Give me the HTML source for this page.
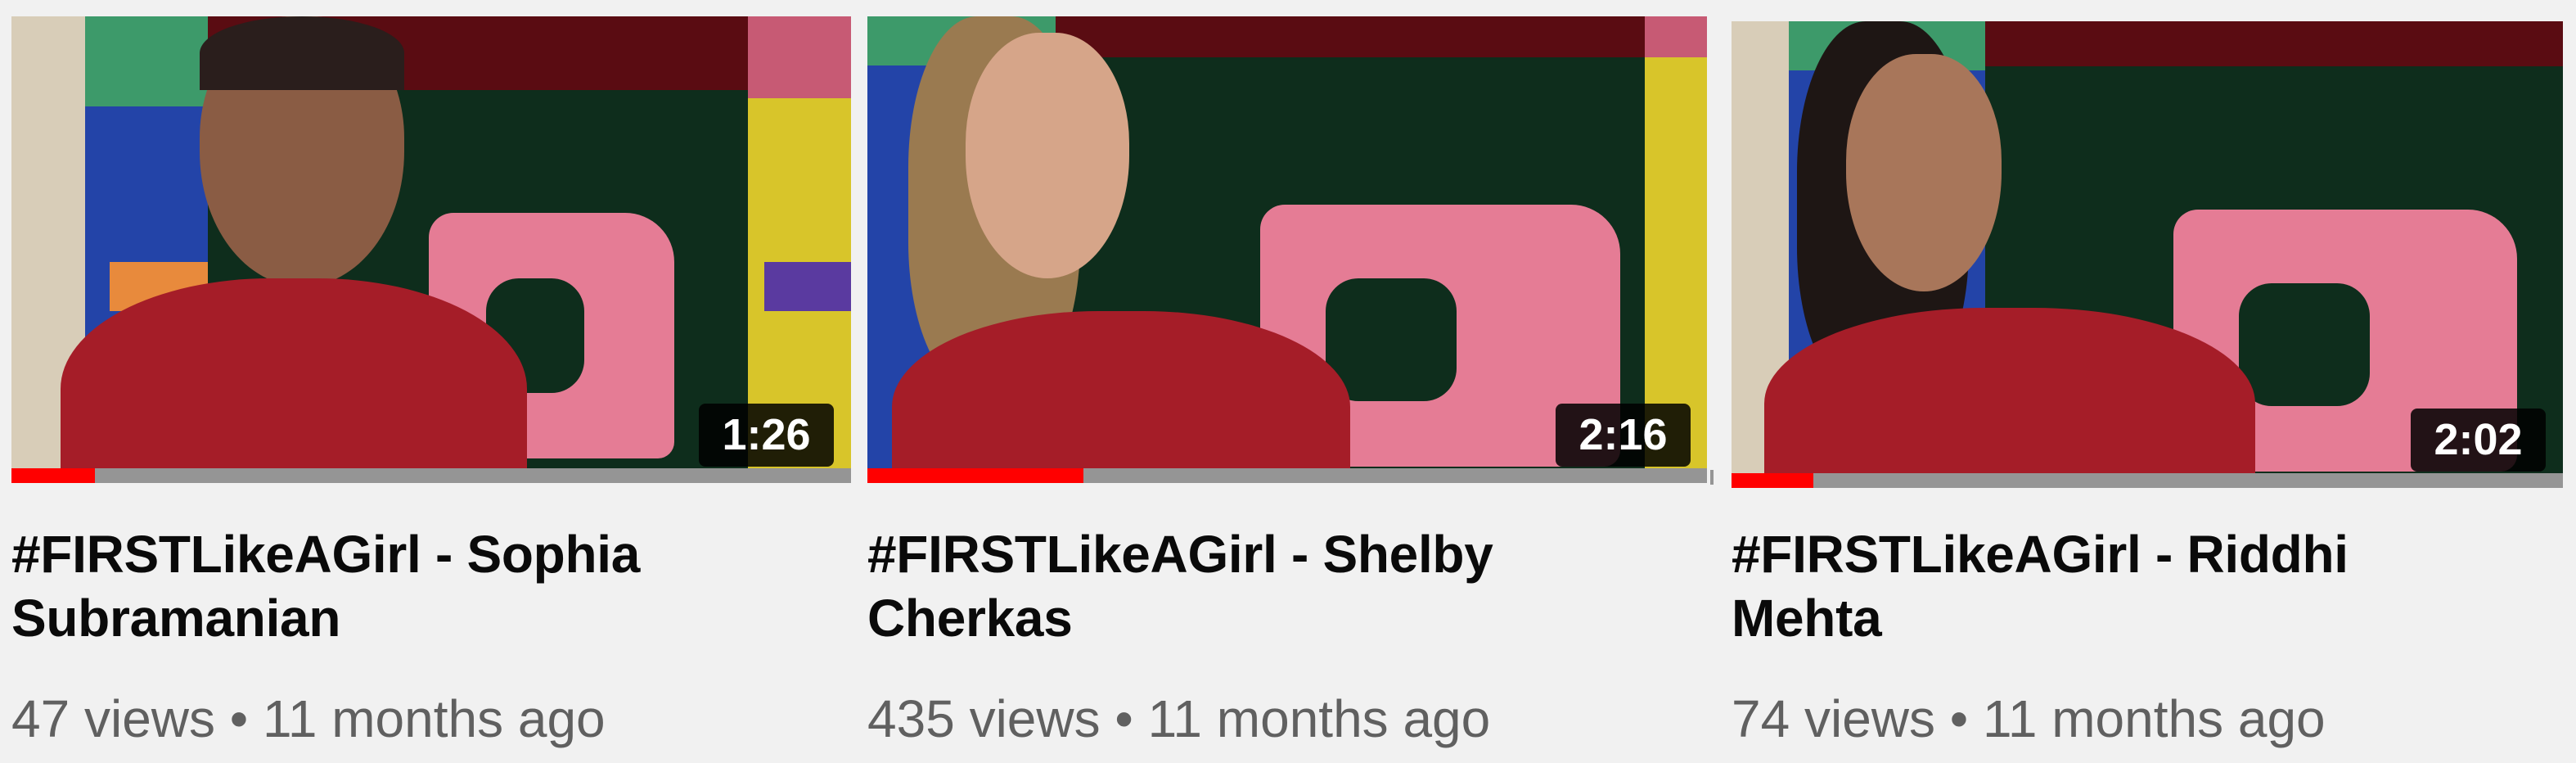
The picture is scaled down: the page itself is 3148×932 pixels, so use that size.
<!DOCTYPE html>
<html><head><meta charset="utf-8"><style>
body{margin:0;width:3148px;height:932px;background:#f1f1f1;position:relative;overflow:hidden;font-family:"Liberation Sans",Arial,sans-serif}
.card{position:absolute;width:1026px}
.th{position:absolute;left:0;top:0;width:1026px;height:552px;overflow:hidden;background:#0e2a18}
.th div{position:absolute}
.bar{position:absolute;left:0;top:552px;width:1026px;height:18px;background:#959595}
.bar i{position:absolute;left:0;top:0;height:18px;background:#ff0000}
.dur{position:absolute;top:473px;width:165px;height:77px;border-radius:8px;background:rgba(0,0,0,.85);color:#fff;font-weight:bold;font-size:54px;line-height:77px;text-align:center}
.t{position:absolute;left:0;top:618px;font-size:64px;font-weight:bold;line-height:78px;color:#0a0a0a;letter-spacing:-0.3px}
.m{position:absolute;left:0;top:822px;font-size:64px;color:#606060;line-height:72px}
</style></head><body>

<div class="card" style="left:14px;top:20px">
 <div class="th">
  <div style="left:0;top:0;width:90px;height:552px;background:#d8cdb8"></div>
  <div style="left:90px;top:0;width:150px;height:110px;background:#3d9a6a"></div>
  <div style="left:90px;top:110px;width:150px;height:442px;background:#2344a8"></div>
  <div style="left:120px;top:300px;width:140px;height:60px;background:#e88a3c"></div>
  <div style="left:240px;top:0;width:660px;height:90px;background:#5a0c12"></div>
  <div style="left:240px;top:90px;width:660px;height:462px;background:#0e2d1c"></div>
  <div style="left:900px;top:0;width:126px;height:100px;background:#c75a74"></div>
  <div style="left:900px;top:100px;width:126px;height:452px;background:#d8c52a"></div>
  <div style="left:920px;top:300px;width:106px;height:60px;background:#5a3aa0"></div>
  <div style="left:510px;top:240px;width:300px;height:300px;background:#e57c95;border-radius:30px 60px 20px 80px"></div>
  <div style="left:580px;top:320px;width:120px;height:140px;background:#0e2d1c;border-radius:40px"></div>
  <div style="left:230px;top:0;width:250px;height:330px;background:#8a5c44;border-radius:45% 45% 50% 50%"></div>
  <div style="left:230px;top:0;width:250px;height:90px;background:#2a1e1c;border-radius:50% 50% 0 0"></div>
  <div style="left:60px;top:320px;width:570px;height:300px;background:#a51d28;border-radius:45% 45% 0 0"></div>
 </div>
 <div class="bar"><i style="width:102px"></i></div>
 <div class="dur" style="left:840px">1:26</div>
 <div class="t">#FIRSTLikeAGirl - Sophia<br>Subramanian</div>
 <div class="m">47 views • 11 months ago</div>
</div>

<div class="card" style="left:1060px;top:20px">
 <div class="th">
  <div style="left:0;top:0;width:60px;height:552px;background:#d8cdb8"></div>
  <div style="left:0;top:0;width:230px;height:60px;background:#3d9a6a"></div>
  <div style="left:0;top:60px;width:230px;height:492px;background:#2344a8"></div>
  <div style="left:230px;top:0;width:720px;height:50px;background:#5a0c12"></div>
  <div style="left:230px;top:50px;width:720px;height:502px;background:#0e2d1c"></div>
  <div style="left:950px;top:0;width:76px;height:50px;background:#c75a74"></div>
  <div style="left:950px;top:50px;width:76px;height:502px;background:#d8c52a"></div>
  <div style="left:480px;top:230px;width:440px;height:320px;background:#e57c95;border-radius:30px 60px 20px 80px"></div>
  <div style="left:560px;top:320px;width:160px;height:150px;background:#0e2d1c;border-radius:40px"></div>
  <div style="left:50px;top:0;width:210px;height:460px;background:#9a7a50;border-radius:40%"></div>
  <div style="left:120px;top:20px;width:200px;height:300px;background:#d6a589;border-radius:45% 45% 50% 50%"></div>
  <div style="left:30px;top:360px;width:560px;height:260px;background:#a51d28;border-radius:45% 45% 0 0"></div>
 </div>
 <div class="bar"><i style="width:264px"></i></div>
 <div class="dur" style="left:841px">2:16</div>
 <div class="t">#FIRSTLikeAGirl - Shelby<br>Cherkas</div>
 <div class="m">435 views • 11 months ago</div>
</div>
<div style="position:absolute;left:2090px;top:574px;width:4px;height:18px;background:#959595"></div>

<div class="card" style="left:2116px;top:26px;width:1016px">
 <div class="th" style="width:1016px">
  <div style="left:0;top:0;width:70px;height:552px;background:#d8cdb8"></div>
  <div style="left:70px;top:0;width:240px;height:60px;background:#3d9a6a"></div>
  <div style="left:70px;top:60px;width:240px;height:492px;background:#2344a8"></div>
  <div style="left:310px;top:0;width:706px;height:55px;background:#5a0c12"></div>
  <div style="left:310px;top:55px;width:706px;height:497px;background:#0e2d1c"></div>
  <div style="left:540px;top:230px;width:420px;height:320px;background:#e57c95;border-radius:30px 60px 20px 80px"></div>
  <div style="left:620px;top:320px;width:160px;height:150px;background:#0e2d1c;border-radius:40px"></div>
  <div style="left:80px;top:0;width:210px;height:460px;background:#1e1614;border-radius:40%"></div>
  <div style="left:140px;top:40px;width:190px;height:290px;background:#a8765a;border-radius:45% 45% 50% 50%"></div>
  <div style="left:40px;top:350px;width:600px;height:260px;background:#a51d28;border-radius:45% 45% 0 0"></div>
 </div>
 <div class="bar" style="width:1016px"><i style="width:100px"></i></div>
 <div class="dur" style="left:830px">2:02</div>
 <div class="t" style="top:612px">#FIRSTLikeAGirl - Riddhi<br>Mehta</div>
 <div class="m" style="top:816px">74 views • 11 months ago</div>
</div>

</body></html>
